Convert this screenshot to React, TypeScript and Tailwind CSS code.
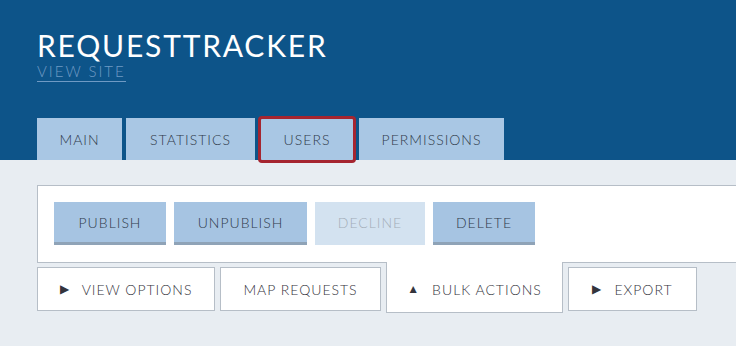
import React from 'react';

const topTabs = [
  { label: 'MAIN', w: 'w-[85px]' },
  { label: 'STATISTICS', w: 'w-[129px]' },
  { label: 'USERS', w: 'w-[96px]', focused: true },
  { label: 'PERMISSIONS', w: 'w-[145px]' },
];

const actions = [
  { label: 'PUBLISH', w: 'w-[112px]' },
  { label: 'UNPUBLISH', w: 'w-[133px]' },
  { label: 'DECLINE', w: 'w-[110px]', disabled: true },
  { label: 'DELETE', w: 'w-[102px]' },
];

const App: React.FC = () => {
  return (
    <div
      className="w-[736px] h-[346px] overflow-hidden bg-[#e8edf2] font-light"
      style={{ fontFamily: 'Lato, "Noto Sans", sans-serif' }}
    >
      <header className="h-[160px] bg-[#0d5489] pl-[37px] pt-[27px] flex flex-col">
        <h1 className="text-[30px] leading-[36px] text-white tracking-[1.8px] font-normal">
          REQUESTTRACKER
        </h1>
        <a className="self-start text-[15px] leading-[17px] text-[#6f9ac4] tracking-[2px] border-b border-[#6f9ac4] pb-[1px]">
          VIEW SITE
        </a>
        <nav className="mt-auto flex items-end gap-[4px]">
          {topTabs.map((t) => (
            <div
              key={t.label}
              className={`relative h-[42px] ${t.w} bg-[#a9c7e4] flex items-center justify-center text-[14px] tracking-[1px] text-[#2f3a4a]`}
            >
              {t.label}
              {t.focused && (
                <div className="absolute -left-[1px] -right-[1px] -top-[2px] -bottom-[3px] border-[3px] border-[#a52530] rounded-[4px]" />
              )}
            </div>
          ))}
        </nav>
      </header>

      <main className="pl-[37px] pt-[25px]">
        <div className="h-[78px] bg-white border border-r-0 border-[#b6bec7] pl-[16px] pt-[16px] flex gap-[8px]">
          {actions.map((a) => (
            <div
              key={a.label}
              className={`h-[43px] ${a.w} flex items-center justify-center text-[14px] tracking-[1px] ${
                a.disabled
                  ? 'bg-[#d3e2f0] text-[#a3adb8] border-b-[3px] border-[#d3e2f0]'
                  : 'bg-[#a6c4e2] text-[#2f3a4a] border-b-[3px] border-[#8fa3b7]'
              }`}
            >
              {a.label}
            </div>
          ))}
        </div>
        <div className="flex gap-[5px] -mt-px items-start">
          <div className="mt-[5px] h-[44px] w-[178px] bg-white border border-[#b6bec7] flex items-center justify-center gap-[12px] text-[14px] tracking-[1px] text-[#34343c]">
            <span className="text-[12px]">▶</span>VIEW OPTIONS
          </div>
          <div className="mt-[5px] h-[44px] w-[161px] bg-white border border-[#b6bec7] flex items-center justify-center text-[14px] tracking-[1px] text-[#34343c]">
            MAP REQUESTS
          </div>
          <div className="h-[51px] w-[177px] bg-white border border-t-0 border-[#b6bec7] flex items-center justify-center gap-[12px] pt-[4px] text-[14px] tracking-[1px] text-[#34343c]">
            <span className="text-[12px]">▲</span>BULK ACTIONS
          </div>
          <div className="mt-[5px] h-[44px] w-[129px] bg-white border border-[#b6bec7] flex items-center justify-center gap-[12px] text-[14px] tracking-[1px] text-[#34343c]">
            <span className="text-[12px]">▶</span>EXPORT
          </div>
        </div>
      </main>
    </div>
  );
};

export default App;
